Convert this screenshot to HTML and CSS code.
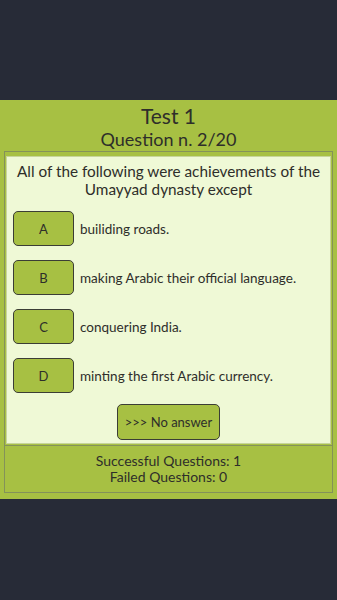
FILE: index.html
```html
<!DOCTYPE html>
<html lang="en">
<head>
  <meta charset="UTF-8" />
  <meta name="viewport" content="width=device-width, initial-scale=1.0"/>
  <title>Test 1</title>
  <link rel="stylesheet" href="styles.css">
</head>
<body>
  <div class="panel">
    <!-- Başlık -->
    <div class="header">
      <div class="title">Test 1</div>
      <div class="subtitle">Question n. 2/20</div>
    </div>

    <!-- Soru alanı -->
    <div class="frame">
      <div class="question-box">
        <p class="question">All of the following were achievements of the Umayyad dynasty except</p>

        <div class="option">
          <button class="letter">A</button>
          <span class="answer">builiding roads.</span>
        </div>
        <div class="option">
          <button class="letter">B</button>
          <span class="answer">making Arabic their official language.</span>
        </div>
        <div class="option">
          <button class="letter">C</button>
          <span class="answer">conquering India.</span>
        </div>
        <div class="option">
          <button class="letter">D</button>
          <span class="answer">minting the first Arabic currency.</span>
        </div>

        <div class="skip-row">
          <button class="skip">&gt;&gt;&gt; No answer</button>
        </div>
      </div>
    </div>

    <!-- Skor -->
    <div class="footer">
      <div>Successful Questions: 1</div>
      <div>Failed Questions: 0</div>
    </div>
  </div>
</body>
</html>
```

FILE: styles.css
```css
body {
  margin: 0;
  background-color: #272b37;
  font-family: Lato, "Noto Sans", sans-serif;
  color: #2e2e2a;
  height: 600px;
}
.panel {
  margin-top: 100px;
  background-color: #a7c043;
  padding-bottom: 6px;
}
.header {
  text-align: center;
  padding-top: 4px;
  height: 47px;
}
.title {
  font-size: 21px;
  line-height: 24px;
}
.subtitle {
  font-size: 18px;
  line-height: 22px;
}
.frame {
  margin: 0 4px;
  border: 1px solid #849259;
  border-bottom: none;
  padding: 4px 1px 1px 1px;
}
.question-box {
  background-color: #eff9d6;
  border: 1px solid #c7d59a;
  padding: 5px 6px 3px 6px;
}
.question {
  margin: 0 0 13px 0;
  text-align: center;
  font-size: 15.3px;
  line-height: 18px;
}
.option {
  display: flex;
  align-items: center;
  gap: 6px;
  margin-bottom: 14px;
}
.letter {
  width: 61px;
  height: 35px;
  background-color: #a7c043;
  border: 1px solid #3b3d35;
  border-radius: 5px;
  font-family: inherit;
  font-size: 13px;
  color: #2e2e2a;
  padding: 0;
}
.answer {
  font-size: 13.5px;
}
.skip-row {
  display: flex;
  justify-content: center;
  margin-top: -3px;
}
.skip {
  width: 103px;
  height: 36px;
  background-color: #a7c043;
  border: 1px solid #3b3d35;
  border-radius: 5px;
  font-family: inherit;
  font-size: 13px;
  color: #2e2e2a;
  padding: 0;
}
.footer {
  margin: 0 4px;
  border: 1px solid #849259;
  padding: 7px 0;
  text-align: center;
  font-size: 14px;
  line-height: 16px;
}
```
